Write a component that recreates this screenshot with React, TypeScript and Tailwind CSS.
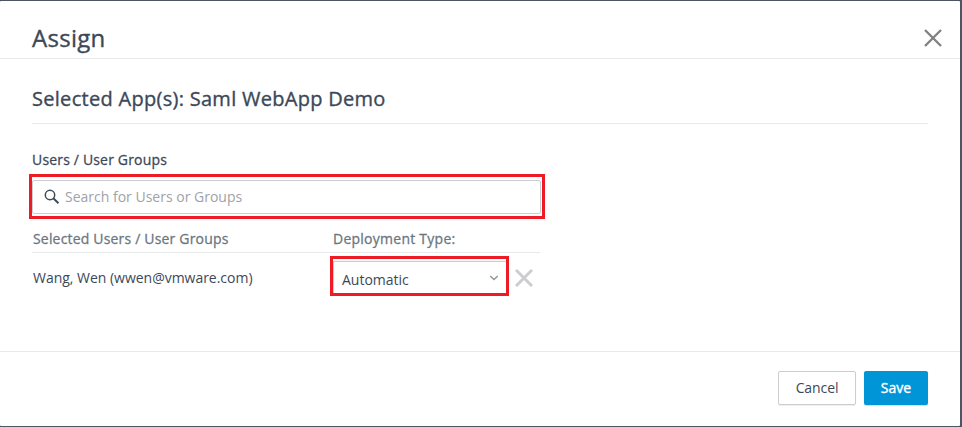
import React from "react";

function Cross({ size, color, width }: { size: number; color: string; width: number }) {
  return (
    <svg width={size} height={size} viewBox="0 0 18 18" fill="none" stroke={color} strokeWidth={width}>
      <path d="M1 1 17 17M17 1 1 17" />
    </svg>
  );
}

function Header() {
  return (
    <header className="flex h-[58px] shrink-0 items-center justify-between border-b border-[#e8e9ea] pt-[17px] pr-[18px] pl-8">
      <h1 className="text-[24px] leading-8 tracking-[0.28px] [-webkit-text-stroke:0.35px_#3c4858]">Assign</h1>
      <button aria-label="Close">
        <Cross size={18} color="#808080" width={2.3} />
      </button>
    </header>
  );
}

function SearchBox() {
  return (
    <div className="-ml-[3px] h-[45px] w-[516px] border-[3px] border-[#ed1c24] pt-[3px] pr-[1px]">
      <label className="flex h-[34px] items-center rounded-[2px] border border-[#cccdd0] pl-[11px]">
        <svg width="16" height="16" viewBox="0 0 16 16" fill="none" stroke="#3c4a59">
          <circle cx="6" cy="6" r="4.7" strokeWidth="1.5" />
          <path d="m9.300 9.300 5.200 5" strokeWidth="1.9" />
        </svg>
        <span className="ml-[5px] text-[14px] leading-5 text-[#a0a2a8]">Search for Users or Groups</span>
      </label>
    </div>
  );
}

function Assignments() {
  return (
    <section className="w-[508px]">
      <div className="flex h-[34px] border-b border-[#e8e9ea] pt-[10px] pl-[1px] text-[14px] leading-5 tracking-[0.18px] text-[#6c7680] [-webkit-text-stroke:0.28px_#6c7680]">
        <span className="w-[300px]">Selected Users / User Groups</span>
        <span className="tracking-[0.25px]">Deployment Type:</span>
      </div>
      <div className="flex pt-[3px] pl-[1px] text-[14px] leading-5">
        <span className="w-[297px] pt-[12px] tracking-[-0.02px]">Wang, Wen (wwen@vmware.com)</span>
        <div className="h-[40px] w-[179px] shrink-0 border-[3px] border-[#ed1c24] pt-[2px]">
          <div className="flex h-[32px] items-center justify-between border-t border-l border-[#cccdd0] pt-[5px] pr-[7px] pl-[8px]">
            <span>Automatic</span>
            <svg width="10" height="8" viewBox="0 0 10 8" fill="none" stroke="#8e979f" strokeWidth="1.5" className="-mt-[5px]">
              <path d="m1.3 2 3.7 3.5L8.700 2" />
            </svg>
          </div>
        </div>
        <button aria-label="Remove" className="mt-[13px] ml-[6px] h-[18px] shrink-0">
          <Cross size={18} color="#cccdd0" width={3} />
        </button>
      </div>
    </section>
  );
}

function Footer() {
  return (
    <footer className="flex h-[75px] shrink-0 justify-end gap-2 border-t border-[#e8e9ea] pt-[19px] pr-8 text-[14px]">
      <button className="h-[34px] w-[78px] rounded-[2px] border border-[#cccdd0] pb-[2px] tracking-[-0.1px] shadow-[0_1px_1px_#eeeeee]">Cancel</button>
      <button className="h-[34px] w-[64px] rounded-[2px] bg-[#0095d7] pb-[2px] text-white shadow-[0_1px_1px_#dddddd] [-webkit-text-stroke:0.38px_#ffffff]">Save</button>
    </footer>
  );
}

export default function App() {
  return (
    <div className="h-[427px] w-[962px] bg-[#4d5462] pt-px pr-[2px] pb-px font-['Open_Sans','Noto_Sans',sans-serif] text-[#3c4858]">
      <div className="flex h-[425px] flex-col rounded-[1px] bg-white">
        <Header />
        <main className="flex-1 px-8">
          <h2 className="h-[65px] border-b border-[#e8e9ea] pt-[26px] text-[20px] leading-7 tracking-[0.29px] [-webkit-text-stroke:0.35px_#3c4858]">
            Selected App(s): Saml WebApp Demo
          </h2>
          <h3 className="h-[50px] pt-[26px] text-[14px] leading-5 tracking-[0.17px] [-webkit-text-stroke:0.28px_#3c4858]">Users / User Groups</h3>
          <SearchBox />
          <Assignments />
        </main>
        <Footer />
      </div>
    </div>
  );
}
